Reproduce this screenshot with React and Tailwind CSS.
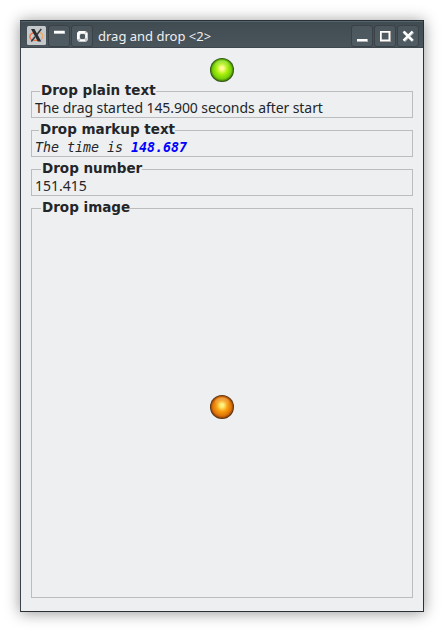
function TitleButton({ children }) {
  return (
    <div className="flex h-[22px] w-[22px] shrink-0 items-center justify-center rounded-[3px] border border-[#3a4147] bg-linear-to-b from-[#4b565d] to-[#505c63]">
      <svg width="20" height="20" viewBox="0 0 20 20" fill="none">{children}</svg>
    </div>
  );
}

function XLogo() {
  return (
    <svg className="ml-[6px] shrink-0" width="19" height="19" viewBox="0 0 19 19">
      <rect width="19" height="19" rx="1.5" fill="#c5c9cc" />
      <path d="M9 6.500C5 6.500 2.800 8.500 2.800 10.800c0 3 4 4.500 8 3" fill="none" stroke="#f0713f" strokeWidth="1.300" />
      <path d="M13 6.500c3 .8 4 4.500 1 7" fill="none" stroke="#eda667" strokeWidth="1.300" />
      <path d="M4 3h3.500l6.800 12.500h-3.500z" fill="#292d30" />
      <path d="M14.300 3L9.800 8.800M8 10.800L4.300 15.500" stroke="#33373a" strokeWidth="1.500" />
    </svg>
  );
}

function GroupBox({ title, titleClass, className, children }) {
  return (
    <section className={`relative border border-[#babcbe] ${className}`}>
      <h2 className={`absolute -top-[12px] h-[20px] bg-[#eeeff1] pl-px font-['DejaVu_Sans'] text-[13.500px] leading-[20px] font-bold whitespace-nowrap ${titleClass}`}>
        {title}
      </h2>
      {children}
    </section>
  );
}

function Orb({ id, center, middle, outer, edge, rim }) {
  return (
    <svg width="24" height="24" viewBox="0 0 24 24">
      <defs>
        <radialGradient id={id} cx="50%" cy="50%" r="50%" fx="50%" fy="42%">
          <stop offset="0" stopColor={center} />
          <stop offset="0.14" stopColor={center} />
          <stop offset="0.45" stopColor={middle} />
          <stop offset="0.78" stopColor={outer} />
          <stop offset="0.9" stopColor={edge} />
          <stop offset="1" stopColor={rim} />
        </radialGradient>
        <linearGradient id={`${id}-gloss`} x1="0" y1="0" x2="0" y2="1">
          <stop offset="0" stopColor="#fff" stopOpacity="0.25" />
          <stop offset="1" stopColor="#fff" stopOpacity="0" />
        </linearGradient>
      </defs>
      <circle cx="12" cy="12" r="12" fill={`url(#${id})`} />
      <ellipse cx="12" cy="7" rx="7" ry="4.500" fill={`url(#${id}-gloss)`} />
    </svg>
  );
}

export default function App() {
  return (
    <main className="h-[632px] w-[444px] overflow-hidden bg-white p-5 font-['Noto_Sans',sans-serif] text-[#232629]">
      <div className="flex h-[592px] w-[404px] flex-col border border-[#2b3035] border-l-[#3a444d] bg-[#eeeff1] shadow-[0_1px_14px_rgba(0,0,0,0.42)]">
        <header className="flex h-[27px] shrink-0 items-center border-t border-b border-t-[#55636a] border-b-[#3f474e] bg-linear-to-b from-[#414b52] to-[#49545b] pt-[2px]">
          <XLogo />
          <div className="ml-[2px] flex gap-px">
            <TitleButton><path d="M5 6.500h11" stroke="#b1b5b8" strokeWidth="3" /><path d="M5 6h10.500" stroke="#fff" strokeWidth="2.500" /></TitleButton>
            <TitleButton>
              <path d="M7 5h7l2 2v7l-2 2H7l-2-2V7zM9 8l-1 1v3l1 1h3l1-1V9l-1-1z" fill="#c5c9cb" fillRule="evenodd" />
              <path d="M7 5h6v2.500H8.500L7.500 9v4H5V7zM13.500 7H15v5h-1.500zM8 13.500h5V15H8z" fill="#fff" />
            </TitleButton>
          </div>
          <span className="ml-[5px] text-[13px] leading-5 text-[#eff0f1]">drag and drop &lt;2&gt;</span>
          <div className="mr-[4px] ml-auto flex gap-px">
            <TitleButton><path d="M5 14.500h11" stroke="#b1b5b8" strokeWidth="3" /><path d="M5 14h10" stroke="#fff" strokeWidth="2" /></TitleButton>
            <TitleButton><path d="M6 6h9v9H6z" stroke="#b1aaa7" strokeWidth="2" /><path d="M5.750 5.750h8.500v8.500h-8.500z" stroke="#fff" strokeWidth="1.500" /></TitleButton>
            <TitleButton><path d="M6 6l9 9M15 6l-9 9" stroke="#b1b5b8" strokeWidth="3" /><path d="M5.500 5.500l9 9M14.500 5.500l-9 9" stroke="#fff" strokeWidth="2.400" /></TitleButton>
          </div>
        </header>
        <div className="flex flex-1 flex-col px-[10px] pt-[10px] pb-[13px]">
          <div className="flex h-[33px] shrink-0 justify-center">
            <Orb id="green" center="#fff98b" middle="#aaf00a" outer="#74cf0a" edge="#4b8a0b" rim="#213d08" />
          </div>
          <div className="flex flex-1 flex-col gap-3">
            <GroupBox title="Drop plain text" titleClass="left-[8px]" className="h-[27px]">
              <p className="pl-[3px] pt-[6px] text-[14px] leading-[20px] tracking-[-0.075px] whitespace-nowrap">The drag started 145.900 seconds after start</p>
            </GroupBox>
            <GroupBox title="Drop markup text" titleClass="left-[7px]" className="h-[27px]">
              <p className="pl-[3px] pt-[7px] font-['DejaVu_Sans_Mono',monospace] text-[13.300px] leading-[20px] whitespace-nowrap italic">
                The time is <b className="text-[#0000ff]">148.687</b>
              </p>
            </GroupBox>
            <GroupBox title="Drop number" titleClass="left-[9px]" className="h-[27px]">
              <p className="pl-[3px] pt-[6px] text-[14px] leading-[20px]">151.415</p>
            </GroupBox>
            <GroupBox title="Drop image" titleClass="left-[9px]" className="flex flex-1 items-center justify-center">
              <div className="mt-[7px]">
                <Orb id="orange" center="#fff078" middle="#f9a012" outer="#dc7208" edge="#9b4c0a" rim="#3f220c" />
              </div>
            </GroupBox>
          </div>
        </div>
      </div>
    </main>
  );
}
